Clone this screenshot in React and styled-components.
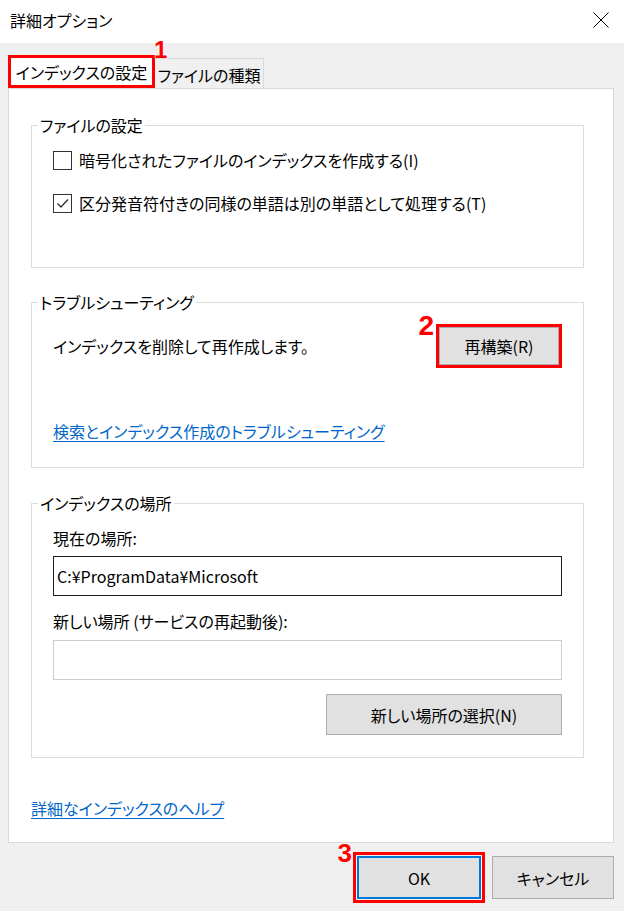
import React from 'react'
import styled, { createGlobalStyle } from 'styled-components'

const GlobalStyle = createGlobalStyle`
  * { box-sizing: border-box; }
  body {
    margin: 0;
    background: #f0f0f0;
    font-family: "Noto Sans CJK JP", "Noto Sans", sans-serif;
    font-feature-settings: "palt";
    color: #000;
  }
`

const Window = styled.div`
  width: 624px;
  height: 911px;
  background: #f0f0f0;
  display: flex;
  flex-direction: column;
  overflow: hidden;
`

const TitleBar = styled.div`
  height: 43px;
  background: #fff;
  display: flex;
  align-items: center;
  justify-content: space-between;
  padding: 0 15px 3px 10px;
  font-size: 16px;
  line-height: 20px;
`

const CloseButton = styled.div`
  width: 16px;
  height: 16px;
  display: flex;
`

const Body = styled.div`
  padding: 12px 10px 0 8px;
`

const TabRow = styled.div`
  display: flex;
  align-items: flex-end;
  height: 33px;
`

const Tab = styled.div`
  position: relative;
  display: flex;
  align-items: center;
  justify-content: center;
  font-size: 16px;
  line-height: 20px;
  width: ${({ $w }) => $w}px;
  height: ${({ $active }) => ($active ? 33 : 30)}px;
  padding-top: ${({ $active }) => ($active ? 0 : 2)}px;
  background: ${({ $active }) => ($active ? '#fff' : '#f0f0f0')};
  border: ${({ $marked }) => ($marked ? '3px solid #ff0000' : '1px solid #d9d9d9')};
  border-left: ${({ $marked }) => ($marked ? '3px solid #ff0000' : 'none')};
  border-bottom: ${({ $marked }) => ($marked ? '3px solid #ff0000' : 'none')};
  white-space: nowrap;
`

const Panel = styled.div`
  height: 755px;
  background: #fff;
  border: 1px solid #d9d9d9;
  padding: 26px 29px 0 22px;
  display: flex;
  flex-direction: column;
`

const Group = styled.fieldset`
  margin: ${({ $mt }) => $mt || 0}px 0 0;
  padding: 0;
  border: 1px solid #dcdcdc;
  height: ${({ $h }) => $h}px;
  min-width: 0;
`

const Legend = styled.legend`
  margin-left: 6px;
  padding: 0 2px;
  font-size: 16px;
  line-height: 20px;
`

const GroupBody = styled.div`
  display: flex;
  flex-direction: column;
  padding: ${({ $pt }) => $pt}px 21px 0;
`

const CheckRow = styled.label`
  display: flex;
  align-items: center;
  gap: 7px;
  height: 24px;
  font-size: 16px;
  line-height: 20px;
  margin-top: ${({ $mt }) => $mt || 0}px;
`

const Box = styled.span`
  width: 19px;
  height: 19px;
  border: 1px solid #333;
  background: #fff;
  display: flex;
  align-items: center;
  justify-content: center;
  flex-shrink: 0;
`

const Text = styled.div`
  font-size: 16px;
  line-height: 20px;
  margin-top: ${({ $mt }) => $mt || 0}px;
`

const ActionRow = styled.div`
  display: flex;
  align-items: center;
  justify-content: space-between;
  margin-top: ${({ $mt }) => $mt || 0}px;
`

const Link = styled.a`
  font-size: 16px;
  line-height: 22px;
  color: #0066cc;
  text-decoration: underline;
  text-underline-offset: 3px;
  align-self: flex-start;
  margin-top: ${({ $mt }) => $mt || 0}px;
`

const Field = styled.input`
  height: 40px;
  width: 100%;
  margin-top: ${({ $mt }) => $mt || 0}px;
  border: 1px solid ${({ $dark }) => ($dark ? '#1e1e1e' : '#cccccc')};
  background: #fff;
  padding: 0 3px;
  font: inherit;
  font-size: 16px;
  color: #000;
  outline: none;
`

const Anchor = styled.div`
  position: relative;
  display: flex;
  align-self: ${({ $self }) => $self || 'auto'};
  margin-top: ${({ $mt }) => $mt || 0}px;
  margin-right: ${({ $mr }) => $mr || 0}px;
`

const Button = styled.button`
  width: ${({ $w }) => $w}px;
  height: ${({ $h }) => $h}px;
  padding: 0;
  background: #e1e1e1;
  border: ${({ $default }) => ($default ? '2px solid #0078d7' : '1px solid #adadad')};
  font: inherit;
  font-size: 16px;
  line-height: 20px;
  color: #000;
  outline: ${({ $marked }) => ($marked ? '3px solid #ff0000' : 'none')};
  outline-offset: ${({ $default }) => ($default ? 1 : 0)}px;
`

const Num = styled.span`
  position: absolute;
  font-family: "Liberation Sans", Arial, sans-serif;
  font-weight: 700;
  font-size: ${({ $size }) => $size}px;
  line-height: 1;
  color: #ff0000;
  text-shadow: 0 0 2px #fff, 0 0 2px #fff;
  top: ${({ $top }) => $top}px;
  ${({ $left }) => ($left !== undefined ? `left: calc(100% + ${$left}px);` : '')}
  ${({ $right }) => ($right !== undefined ? `right: calc(100% + ${$right}px);` : '')}
`

const Footer = styled.div`
  display: flex;
  justify-content: flex-end;
  gap: 11px;
  padding-top: 13px;
`

const Check = () => (
  <svg width="15" height="15" viewBox="0 0 15 15">
    <polyline points="2.5,7.5 6,11 13,3.5" fill="none" stroke="#333" strokeWidth="1.4" />
  </svg>
)

const CloseIcon = () => (
  <svg width="16" height="16" viewBox="0 0 16 16">
    <path d="M0.5 0.5 L15.5 15.5 M15.5 0.5 L0.5 15.5" stroke="#000" strokeWidth="1" />
  </svg>
)

export default function App() {
  return (
    <Window>
      <GlobalStyle />
      <TitleBar>
        <span>詳細オプション</span>
        <CloseButton>
          <CloseIcon />
        </CloseButton>
      </TitleBar>
      <Body>
        <TabRow>
          <Tab $active $marked $w={147}>
            インデックスの設定
            <Num $size={24} $top={-20} $left={2}>1</Num>
          </Tab>
          <Tab $w={109}>ファイルの種類</Tab>
        </TabRow>
        <Panel>
          <Group $h={153}>
            <Legend>ファイルの設定</Legend>
            <GroupBody $pt={13}>
              <CheckRow>
                <Box />
                暗号化されたファイルのインデックスを作成する(I)
              </CheckRow>
              <CheckRow $mt={19}>
                <Box>
                  <Check />
                </Box>
                区分発音符付きの同様の単語は別の単語として処理する(T)
              </CheckRow>
            </GroupBody>
          </Group>

          <Group $h={176} $mt={24}>
            <Legend>トラブルシューティング</Legend>
            <GroupBody $pt={15}>
              <ActionRow>
                <Text>インデックスを削除して再作成します。</Text>
                <Anchor $mr={3}>
                  <Num $size={28} $top={-15} $right={5}>2</Num>
                  <Button $w={120} $h={38} $marked>再構築(R)</Button>
                </Anchor>
              </ActionRow>
              <Link $mt={55}>検索とインデックス作成のトラブルシューティング</Link>
            </GroupBody>
          </Group>

          <Group $h={265} $mt={25}>
            <Legend>インデックスの場所</Legend>
            <GroupBody $pt={15}>
              <Text>現在の場所:</Text>
              <Field $dark $mt={8} readOnly defaultValue="C:¥ProgramData¥Microsoft" />
              <Text $mt={15}>新しい場所 (サービスの再起動後):</Text>
              <Field $mt={9} readOnly defaultValue="" />
              <Anchor $self="flex-end" $mt={14}>
                <Button $w={236} $h={41}>新しい場所の選択(N)</Button>
              </Anchor>
            </GroupBody>
          </Group>

          <Link $mt={39}>詳細なインデックスのヘルプ</Link>
        </Panel>
        <Footer>
          <Anchor>
            <Num $size={26} $top={-16} $right={5}>3</Num>
            <Button $w={124} $h={43} $default $marked>OK</Button>
          </Anchor>
          <Button $w={122} $h={43}>キャンセル</Button>
        </Footer>
      </Body>
    </Window>
  )
}
